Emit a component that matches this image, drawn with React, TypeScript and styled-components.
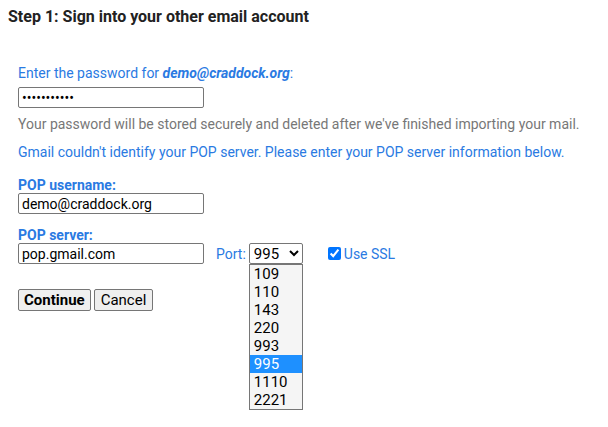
import styled, { createGlobalStyle } from 'styled-components';

const ports = ['109', '110', '143', '220', '993', '995', '1110', '2221'];

export default function App() {
  return (
    <>
      <GlobalStyle />
      <Page>
        <Heading>Step 1: Sign into your other email account</Heading>
        <Form>
          <Field $gap={7}>
            <Prompt>
              Enter the password for <em>demo@craddock.org</em>:
            </Prompt>
            <TextInput type="password" defaultValue="demo123456a" />
          </Field>
          <Note>Your password will be stored securely and deleted after we've finished importing your mail.</Note>
          <Info>Gmail couldn't identify your POP server. Please enter your POP server information below.</Info>

          <Field $gap={13}>
            <Label>POP username:</Label>
            <TextInput type="text" defaultValue="demo@craddock.org" />
          </Field>

          <Field $gap={13}>
            <Label>POP server:</Label>
            <ServerRow>
              <TextInput type="text" defaultValue="pop.gmail.com" />
              <PortLabel>
                Port:
                <SelectWrap>
                  <PortSelect defaultValue="995">
                    {ports.map((p) => (
                      <option key={p} value={p}>{p}</option>
                    ))}
                  </PortSelect>
                  <PortList>
                    {ports.map((p) => (
                      <PortItem key={p} $selected={p === '995'}>{p}</PortItem>
                    ))}
                  </PortList>
                </SelectWrap>
              </PortLabel>
              <SslLabel>
                <input type="checkbox" defaultChecked />
                Use SSL
              </SslLabel>
            </ServerRow>
          </Field>

          <Buttons>
            <Button $primary>Continue</Button>
            <Button>Cancel</Button>
          </Buttons>
        </Form>
      </Page>
    </>
  );
}

const GlobalStyle = createGlobalStyle`
  body {
    margin: 0;
    background: #fff;
    font-family: Roboto, "Liberation Sans", Arial, sans-serif;
  }
`;

const Page = styled.div`
  min-height: 100vh;
  box-sizing: border-box;
  padding: 8px 8px 0 8px;
`;

const Heading = styled.h1`
  margin: 0;
  font-size: 16px;
  line-height: 18px;
  font-weight: bold;
  color: #222;
`;

const Form = styled.div`
  padding: 37px 10px 0 10px;
  font-size: 14px;
  color: #2a7ae2;
`;

const Field = styled.div<{ $gap: number }>`
  display: flex;
  flex-direction: column;
  align-items: flex-start;
  margin-bottom: ${(p) => p.$gap}px;
`;

const Prompt = styled.div`
  line-height: 20px;
  margin-bottom: 4px;

  em {
    font-weight: bold;
  }
`;

const Label = styled.div`
  font-weight: bold;
  line-height: 16px;
`;

const TextInput = styled.input`
  box-sizing: border-box;
  width: 186px;
  height: 21px;
  padding: 1px 3px;
  border: 1px solid #767676;
  border-radius: 2px;
  font-family: Roboto, "Liberation Sans", Arial, sans-serif;
  font-size: 14px;
  color: #000;
`;

const Note = styled.div`
  color: #777;
  line-height: 18px;
`;

const Info = styled.div`
  line-height: 18px;
  margin: 10px 0 16px;
`;

const ServerRow = styled.div`
  display: flex;
  align-items: center;
`;

const PortLabel = styled.label`
  display: flex;
  align-items: center;
  gap: 3px;
  margin-left: 12px;
`;

const SelectWrap = styled.div`
  position: relative;
`;

const PortSelect = styled.select`
  width: 54px;
  height: 21px;
  font-family: Roboto, "Liberation Sans", Arial, sans-serif;
  font-size: 15px;
  color: #000;
  border: 1px solid #767676;
  border-radius: 2px;
  background: #fff;
`;

const PortList = styled.div`
  position: absolute;
  top: 21px;
  left: 0;
  width: 54px;
  box-sizing: border-box;
  border: 1px solid #767676;
  background: #f5f5f5;
  z-index: 2;
`;

const PortItem = styled.div<{ $selected?: boolean }>`
  height: 18px;
  line-height: 18px;
  padding-left: 4px;
  font-size: 15px;
  color: ${(p) => (p.$selected ? '#fff' : '#000')};
  background: ${(p) => (p.$selected ? '#1e90ff' : 'transparent')};
`;

const SslLabel = styled.label`
  display: flex;
  align-items: center;
  gap: 3px;
  margin-left: 25px;

  input {
    margin: 0;
    width: 13px;
    height: 13px;
  }
`;

const Buttons = styled.div`
  display: flex;
  gap: 3px;
  margin-top: 25px;
`;

const Button = styled.button<{ $primary?: boolean }>`
  height: 22px;
  padding: 0 ${(p) => (p.$primary ? 5 : 6)}px;
  font-family: Roboto, "Liberation Sans", Arial, sans-serif;
  font-size: 15px;
  font-weight: ${(p) => (p.$primary ? 'bold' : 'normal')};
  color: #000;
  background: #efefef;
  border: 1px solid #767676;
  border-radius: 2px;
`;
